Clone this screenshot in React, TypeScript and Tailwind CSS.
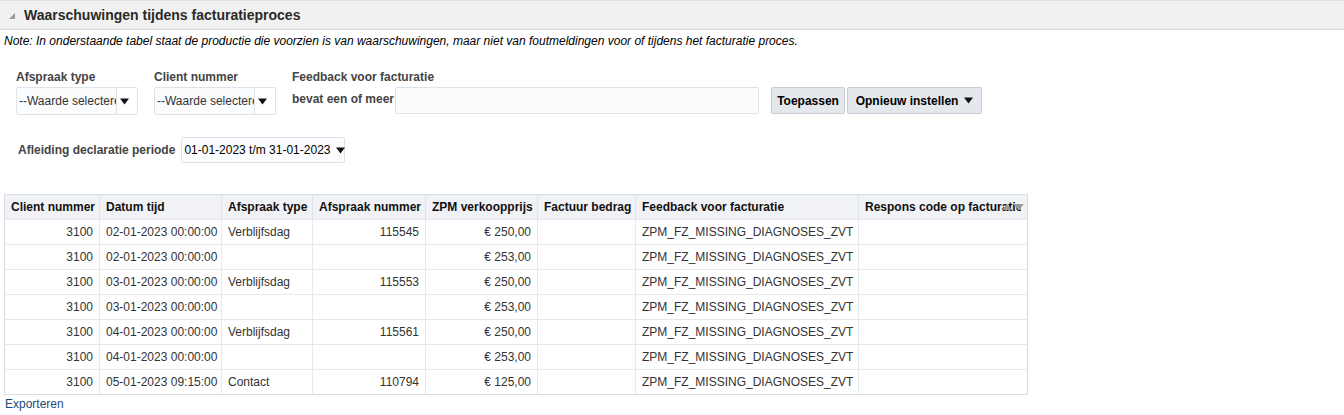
import { ReactNode } from 'react'

const rows = [
  { client: '3100', datum: '02-01-2023 00:00:00', type: 'Verblijfsdag', nummer: '115545', prijs: '€ 250,00' },
  { client: '3100', datum: '02-01-2023 00:00:00', type: '', nummer: '', prijs: '€ 253,00' },
  { client: '3100', datum: '03-01-2023 00:00:00', type: 'Verblijfsdag', nummer: '115553', prijs: '€ 250,00' },
  { client: '3100', datum: '03-01-2023 00:00:00', type: '', nummer: '', prijs: '€ 253,00' },
  { client: '3100', datum: '04-01-2023 00:00:00', type: 'Verblijfsdag', nummer: '115561', prijs: '€ 250,00' },
  { client: '3100', datum: '04-01-2023 00:00:00', type: '', nummer: '', prijs: '€ 253,00' },
  { client: '3100', datum: '05-01-2023 09:15:00', type: 'Contact', nummer: '110794', prijs: '€ 125,00' },
]

function Caret() {
  return (
    <svg width="9" height="7" viewBox="0 0 9 7" className="shrink-0">
      <path d="M0 0.5 L9 0.5 L4.5 6.5 Z" fill="#111" />
    </svg>
  )
}

function Select({ label }: { label: string }) {
  return (
    <div className="flex h-[28px] w-[122px] items-center rounded-[2px] border border-[#dfe3e8] bg-white">
      <div className="flex h-full w-[100px] items-center overflow-hidden whitespace-nowrap border-r border-[#dfe3e8] bg-[#fbfcfd] pl-[2px] text-[12px] text-[#333]">
        {label}
      </div>
      <div className="pl-[3px]">
        <Caret />
      </div>
    </div>
  )
}

function Th({ children, w, last }: { children: ReactNode; w: string; last?: boolean }) {
  return (
    <th
      className={`${w} relative h-[25px] border-r border-[#dfe4ea] px-[6px] text-left align-middle font-bold whitespace-nowrap ${last ? 'border-r-0' : ''}`}
    >
      {children}
    </th>
  )
}

export default function App() {
  return (
    <div className="h-[415px] w-[1344px] overflow-hidden bg-white text-[#333]" style={{ fontFamily: '"Liberation Sans", Arial, sans-serif' }}>
      {/* Header */}
      <div className="flex h-[30px] items-center border-t border-b border-t-[#dce2e8] border-b-[#dadada] bg-[#f1f1f1]">
        <svg width="8" height="8" viewBox="0 0 8 8" className="ml-[8px] mt-[2px]">
          <path d="M7 1 L7 7 L1 7 Z" fill="#9a9a9a" />
        </svg>
        <span className="ml-[8px] text-[14px] font-bold text-[#2a2a2a]">Waarschuwingen tijdens facturatieproces</span>
      </div>
      <p className="ml-[4px] mt-[2px] text-[12px] italic text-[#000]">
        Note: In onderstaande tabel staat de productie die voorzien is van waarschuwingen, maar niet van foutmeldingen voor of tijdens het facturatie proces.
      </p>

      {/* Filters */}
      <div className="ml-[16px] mt-[18px] flex items-start">
        <div className="flex flex-col">
          <span className="text-[12px] font-bold text-[#444]">Afspraak type</span>
          <div className="mt-[1px]">
            <Select label="--Waarde selecteren--" />
          </div>
        </div>
        <div className="ml-[16px] flex flex-col">
          <span className="text-[12px] font-bold text-[#444]">Client nummer</span>
          <div className="mt-[1px]">
            <Select label="--Waarde selecteren--" />
          </div>
        </div>
        <div className="ml-[16px] flex flex-col">
          <span className="text-[12px] font-bold text-[#444]">Feedback voor facturatie</span>
          <div className="mt-[1px] flex items-center">
            <span className="-mt-[4px] text-[12px] font-bold text-[#444]">bevat een of meer</span>
            <div className="ml-[1px] h-[27px] w-[364px] rounded-[2px] border border-[#dfe3e8] bg-[#fbfcfd]" />
            <button className="ml-[12px] h-[27px] w-[74px] rounded-[2px] border border-[#c5cdd5] bg-[#e4e8ec] text-[12px] font-bold text-[#000]">
              Toepassen
            </button>
            <button className="ml-[2px] flex h-[27px] w-[135px] items-center justify-center gap-[6px] rounded-[2px] border border-[#c5cdd5] bg-[#e4e8ec] text-[12px] font-bold text-[#000]">
              Opnieuw instellen
              <Caret />
            </button>
          </div>
        </div>
      </div>

      <div className="ml-[18px] mt-[22px] flex items-center">
        <span className="text-[12px] font-bold text-[#444]">Afleiding declaratie periode</span>
        <div className="ml-[6px] flex h-[26px] w-[164px] items-center gap-[6px] whitespace-nowrap rounded-[2px] border border-[#dfe3e8] bg-[#fbfcfd] pl-[2px] text-[12px] text-[#000]">
          01-01-2023 t/m 31-01-2023
          <Caret />
        </div>
      </div>

      {/* Table */}
      <table className="ml-[4px] mt-[31px] w-[1023px] table-fixed border-collapse border border-[#d6dde4] text-[12px] text-[#333]">
        <thead>
          <tr className="bg-[#f0f2f5] text-[#111]">
            <Th w="w-[95px]">Client nummer</Th>
            <Th w="w-[122px]">Datum tijd</Th>
            <Th w="w-[91px]">Afspraak type</Th>
            <Th w="w-[113px]">Afspraak nummer</Th>
            <Th w="w-[112px]">ZPM verkoopprijs</Th>
            <Th w="w-[98px]">Factuur bedrag</Th>
            <Th w="w-[223px]">Feedback voor facturatie</Th>
            <Th w="w-[169px]" last>
              <span className="block overflow-hidden">Respons code op facturatie</span>
              <svg width="24" height="8" viewBox="0 0 24 8" className="absolute right-[2px] top-[8px]">
                <path d="M1 7 L6 1 L11 7 Z" fill="#999" />
                <path d="M12 1 L23 1 L17.5 7 Z" fill="#999" />
              </svg>
            </Th>
          </tr>
        </thead>
        <tbody>
          {rows.map((r, i) => (
            <tr key={i} className="h-[25px] border-t border-[#e6eaee]">
              <td className="border-r border-[#e6eaee] px-[6px] text-right">{r.client}</td>
              <td className="border-r border-[#e6eaee] px-[6px] whitespace-nowrap">{r.datum}</td>
              <td className="border-r border-[#e6eaee] px-[6px]">{r.type}</td>
              <td className="border-r border-[#e6eaee] px-[6px] text-right">{r.nummer}</td>
              <td className="border-r border-[#e6eaee] px-[6px] text-right">{r.prijs}</td>
              <td className="border-r border-[#e6eaee] px-[6px]"></td>
              <td className="border-r border-[#e6eaee] px-[6px] whitespace-nowrap">ZPM_FZ_MISSING_DIAGNOSES_ZVT</td>
              <td className="px-[6px]"></td>
            </tr>
          ))}
        </tbody>
      </table>
      <div className="border-b border-[#c9d0d8] pb-[3px] pl-[5px] pt-0 text-[12px] text-[#1a4a80]">Exporteren</div>
    </div>
  )
}
